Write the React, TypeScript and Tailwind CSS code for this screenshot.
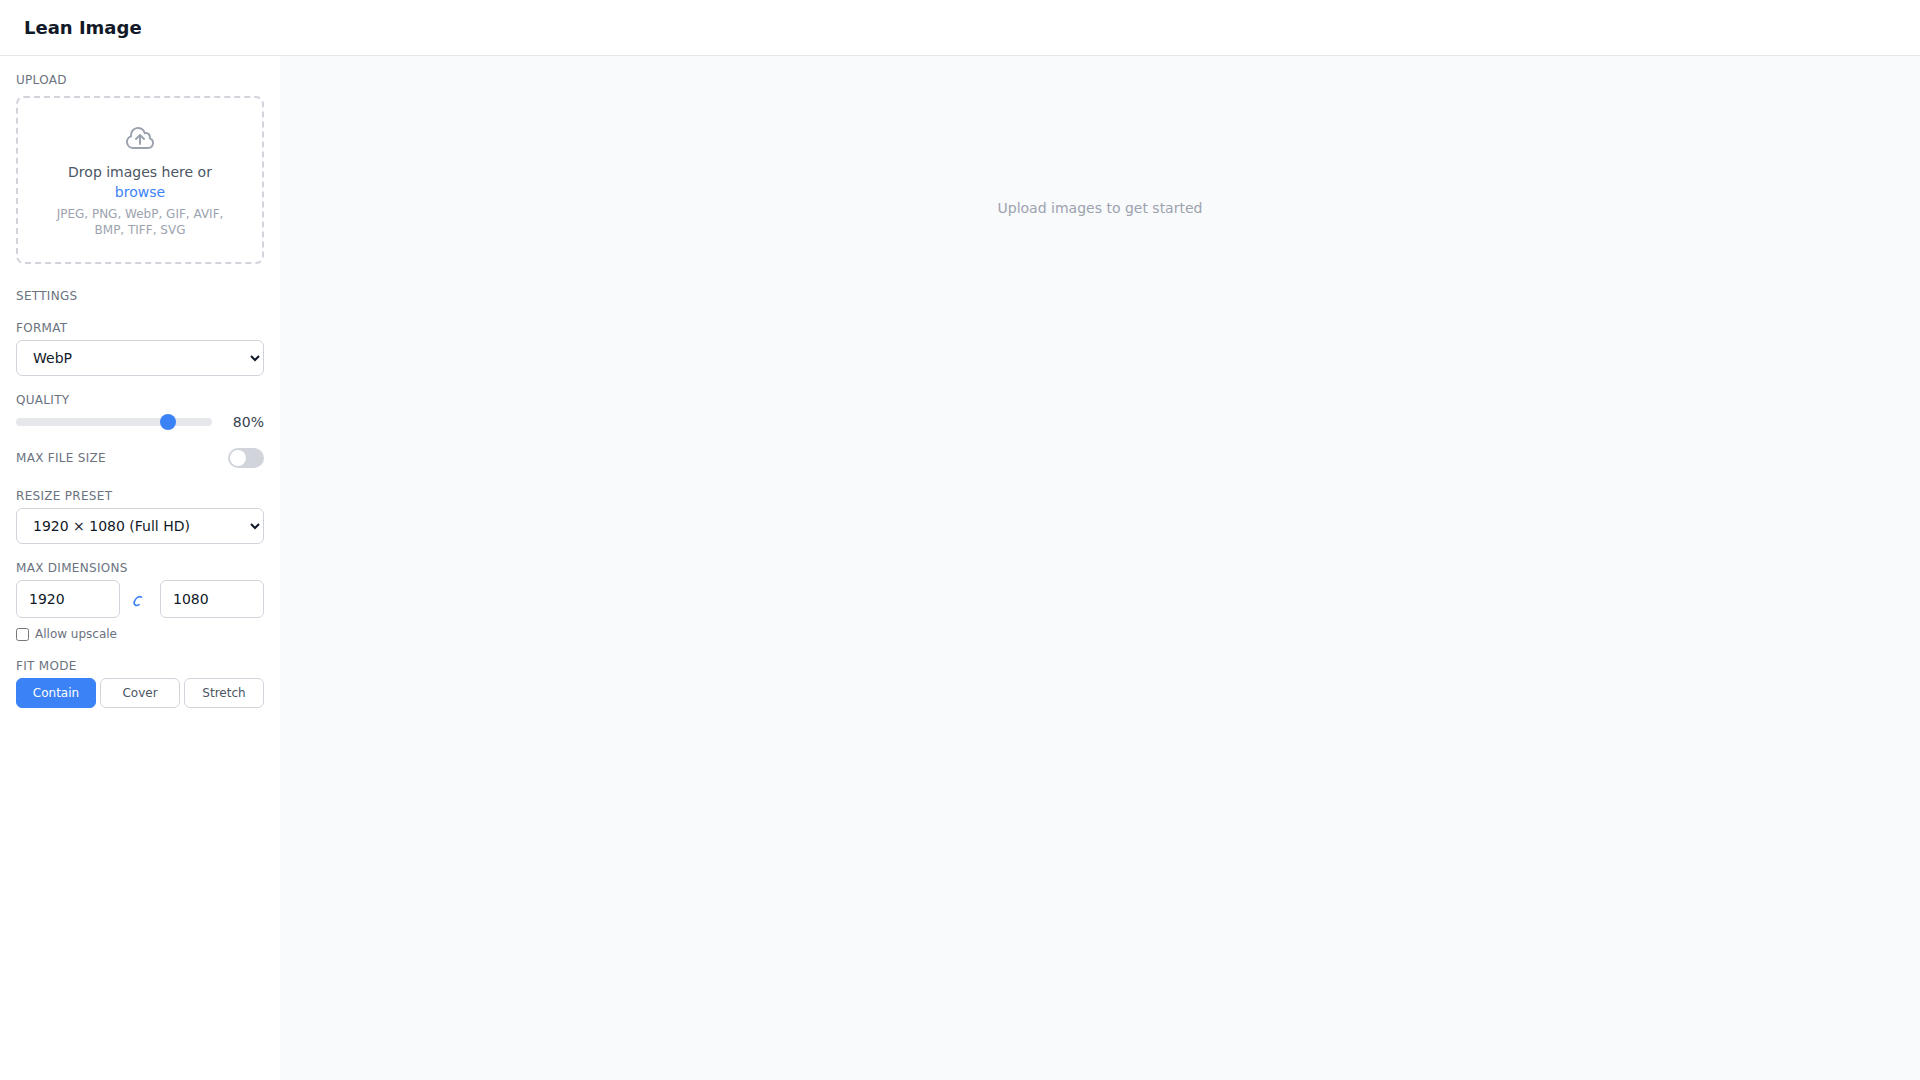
import { useState } from 'react'

const labelClass = 'block text-xs uppercase tracking-wide text-[#6b7280]'
const fieldClass = 'rounded-md border border-[#d1d5db] bg-white text-sm text-[#111827]'

export default function App() {
  const [format, setFormat] = useState('webp')
  const [preset, setPreset] = useState('fhd')
  const [quality, setQuality] = useState(80)

  return (
    <div className="flex h-screen flex-col overflow-hidden bg-[#f9fafb] font-['DejaVu_Sans',sans-serif] text-[#111827] antialiased">
      {/* Header */}
      <header className="flex h-14 shrink-0 items-center border-b border-[#e5e7eb] bg-white px-6">
        <h1 className="text-lg font-bold">Lean Image</h1>
      </header>

      <div className="flex min-h-0 flex-1">
        {/* Sidebar */}
        <aside className="w-[280px] shrink-0 bg-white p-4">
          <h2 className={`${labelClass} mb-2`}>Upload</h2>
          <div className="rounded-lg border-2 border-dashed border-[#d1d5db] p-6 text-center">
            <svg
              className="mx-auto mb-2 h-8 w-8 text-[#9ca3af]"
              viewBox="0 0 24 24"
              fill="none"
              stroke="currentColor"
              strokeWidth="1.5"
              strokeLinecap="round"
              strokeLinejoin="round"
            >
              <path d="M12 16.5V9.75m0 0 3 3m-3-3-3 3M6.75 19.5a4.5 4.5 0 0 1-1.41-8.775 5.25 5.25 0 0 1 10.233-2.33 3 3 0 0 1 3.758 3.848A3.752 3.752 0 0 1 18 19.5H6.75Z" />
            </svg>
            <p className="text-sm text-[#4b5563]">
              Drop images here or <span className="text-[#3b82f6]">browse</span>
            </p>
            <p className="mt-1 text-xs text-[#9ca3af]">JPEG, PNG, WebP, GIF, AVIF, BMP, TIFF, SVG</p>
          </div>

          <h2 className={`${labelClass} mt-6 mb-4`}>Settings</h2>
          <div className="space-y-4">
            <div>
              <label className={`${labelClass} mb-1`}>Format</label>
              <select value={format} onChange={e => setFormat(e.target.value)} className={`${fieldClass} h-9 w-full px-3`}>
                <option value="jpeg">JPEG</option>
                <option value="png">PNG</option>
                <option value="webp">WebP</option>
                <option value="avif">AVIF</option>
              </select>
            </div>

            <div>
              <label className={`${labelClass} mb-1`}>Quality</label>
              <div className="flex items-center gap-3">
                <input
                  type="range"
                  min={0}
                  max={100}
                  value={quality}
                  onChange={e => setQuality(Number(e.target.value))}
                  className="h-2 min-w-0 flex-1 appearance-none rounded-full bg-[#e5e7eb] [&::-webkit-slider-thumb]:h-4 [&::-webkit-slider-thumb]:w-4 [&::-webkit-slider-thumb]:appearance-none [&::-webkit-slider-thumb]:rounded-full [&::-webkit-slider-thumb]:bg-[#3b82f6]"
                />
                <span className="w-10 text-right text-sm text-[#374151]">{quality}%</span>
              </div>
            </div>

            <div className="flex items-center justify-between">
              <span className={labelClass}>Max file size</span>
              <span className="flex h-5 w-9 items-center rounded-full bg-[#d1d5db] px-0.5">
                <span className="h-4 w-4 rounded-full bg-white" />
              </span>
            </div>

            <div className="pt-1">
              <label className={`${labelClass} mb-1`}>Resize preset</label>
              <select value={preset} onChange={e => setPreset(e.target.value)} className={`${fieldClass} h-9 w-full px-3`}>
                <option value="none">None</option>
                <option value="fhd">1920 × 1080 (Full HD)</option>
                <option value="hd">1280 × 720 (HD)</option>
              </select>
            </div>

            <div>
              <label className={`${labelClass} mb-1`}>Max dimensions</label>
              <div className="flex items-center gap-2">
                <input defaultValue="1920" className={`${fieldClass} w-[104px] px-3 py-2`} />
                <svg className="h-4 w-6 text-[#3b82f6]" viewBox="0 0 24 16" fill="none" stroke="currentColor" strokeWidth="1.6" strokeLinecap="round">
                  <path d="M13.5 6.2C11 4.6 7.8 6.8 6.3 10.6 5.4 13.6 8.2 15.6 11 13.6" />
                </svg>
                <input defaultValue="1080" className={`${fieldClass} w-[104px] px-3 py-2`} />
              </div>
              <label className="mt-2 flex items-center gap-1.5 text-xs text-[#6b7280]">
                <input type="checkbox" className="m-0 h-[13px] w-[13px]" />
                Allow upscale
              </label>
            </div>

            <div>
              <label className={`${labelClass} mb-1`}>Fit mode</label>
              <div className="grid grid-cols-3 gap-1">
                <button className="rounded-md border border-[#3b82f6] bg-[#3b82f6] py-1.5 text-xs text-white">Contain</button>
                <button className="rounded-md border border-[#d1d5db] bg-white py-1.5 text-xs text-[#4b5563]">Cover</button>
                <button className="rounded-md border border-[#d1d5db] bg-white py-1.5 text-xs text-[#4b5563]">Stretch</button>
              </div>
            </div>
          </div>
        </aside>

        {/* Main */}
        <main className="flex-1 pt-[142px] text-center text-sm text-[#9ca3af]">Upload images to get started</main>
      </div>
    </div>
  )
}
